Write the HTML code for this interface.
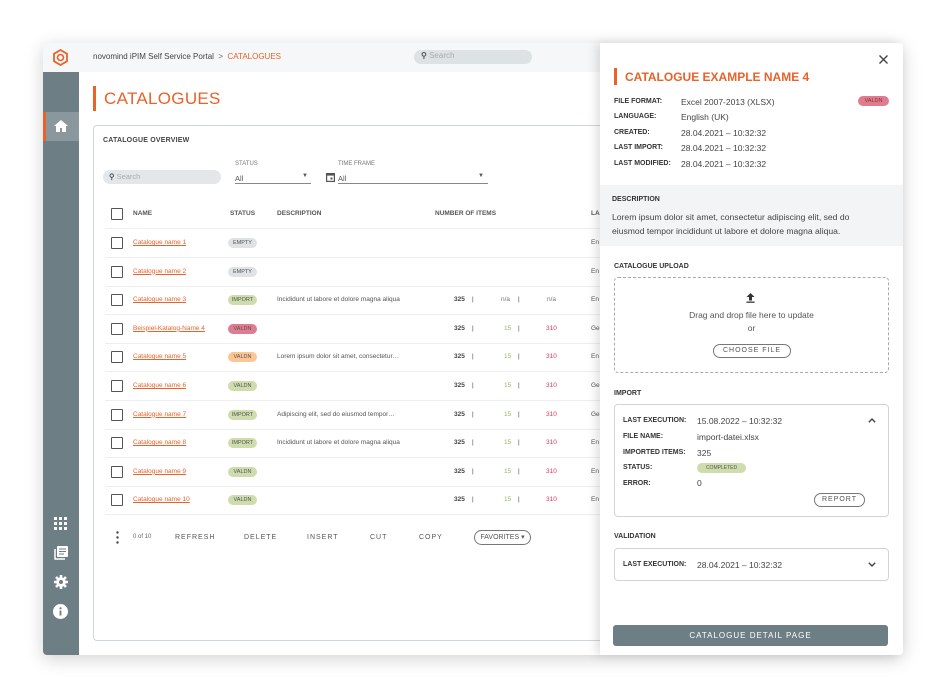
<!DOCTYPE html>
<html><head><meta charset="utf-8"><style>
*{box-sizing:border-box;margin:0;padding:0}
body{width:946px;height:698px;background:#fff;font-family:"Liberation Sans",sans-serif;position:relative;overflow:hidden;color:#333}
.a{position:absolute;white-space:nowrap}
.win{position:absolute;left:43px;top:43px;width:860px;height:612px;background:#fff;box-shadow:0 4px 18px rgba(0,0,0,.18);border-radius:4px;overflow:hidden}
.lbl{font-size:7px;font-weight:bold;color:#444;letter-spacing:.2px}
.pill{position:absolute;height:10px;border-radius:5px;font-size:5.5px;color:#555;text-align:center;line-height:10px;width:29px}
.cb{position:absolute;width:12px;height:12px;border:1.5px solid #555;border-radius:1px}
.lnk{font-size:6.5px;color:#e8622a;text-decoration:underline}
.rl{position:absolute;left:105px;width:500px;height:1px;background:#eceef0}
.pl{font-size:7px;font-weight:bold;color:#333}
.pv{font-size:8.5px;color:#444}
.btn{position:absolute;border:1px solid #777;border-radius:8px;font-size:7px;letter-spacing:1px;color:#555;text-align:center}
</style></head><body>
<div class="win">
 <div class="a" style="left:0;top:0;width:860px;height:29px;background:#f6f7f8"></div>
 <svg class="a" style="left:9px;top:6px" width="17" height="17" viewBox="0 0 17 17"><polygon points="8.5,1 15,4.8 15,12.2 8.5,16 2,12.2 2,4.8" fill="none" stroke="#e8622a" stroke-width="1.8"/><circle cx="8.5" cy="8.5" r="3" fill="none" stroke="#e8622a" stroke-width="1.6"/></svg>
 <div class="a" style="left:50px;top:9px;font-size:8px;color:#444">novomind iPIM Self Service Portal &nbsp;<span style="color:#666">&gt;</span>&nbsp; <span style="color:#e8622a">CATALOGUES</span></div>
 <div class="a" style="left:371px;top:7px;width:118px;height:14px;border-radius:7px;background:#dde2e5"></div>
 <div class="a" style="left:378px;top:8px;font-size:8px;color:#aaa"><b style="color:#555">⚲</b> Search</div>
 <div class="a" style="left:0;top:29px;width:36px;height:583px;background:#6e7e85"></div>
 <div class="a" style="left:0;top:69px;width:36px;height:29px;background:#8a979d;border-left:3px solid #e8622a"></div>
 <svg class="a" style="left:11px;top:77px" width="14" height="12" viewBox="0 0 14 12"><path d="M7 0L0 6h2v6h4V8h2v4h4V6h2z" fill="#fff"/></svg>
 <svg class="a" style="left:11px;top:474px" width="13" height="13" viewBox="0 0 13 13" fill="#fff"><rect x="0" y="0" width="3" height="3"/><rect x="5" y="0" width="3" height="3"/><rect x="10" y="0" width="3" height="3"/><rect x="0" y="5" width="3" height="3"/><rect x="5" y="5" width="3" height="3"/><rect x="10" y="5" width="3" height="3"/><rect x="0" y="10" width="3" height="3"/><rect x="5" y="10" width="3" height="3"/><rect x="10" y="10" width="3" height="3"/></svg>
 <svg class="a" style="left:11px;top:503px" width="14" height="14" viewBox="0 0 14 14"><rect x="3" y="0" width="11" height="11" rx="1" fill="#fff"/><path d="M1 3v10h10" stroke="#fff" stroke-width="1.5" fill="none"/><path d="M5 3h7M5 5.5h7M5 8h5" stroke="#6e7e85"/></svg>
 <svg class="a" style="left:11px;top:532px" width="14" height="14" viewBox="0 0 14 14"><circle cx="7" cy="7" r="4.8" fill="#fff"/><path d="M7 0v14M0 7h14M2 2l10 10M12 2L2 12" stroke="#fff" stroke-width="2.6"/><circle cx="7" cy="7" r="2" fill="#6e7e85"/></svg>
 <svg class="a" style="left:10px;top:561px" width="15" height="15" viewBox="0 0 15 15"><circle cx="7.5" cy="7.5" r="7.5" fill="#fff"/><rect x="6.6" y="6.5" width="1.8" height="5" fill="#6e7e85"/><circle cx="7.5" cy="4.3" r="1.1" fill="#6e7e85"/></svg>
 <div class="a" style="left:50px;top:43px;width:3px;height:25px;background:#e8622a"></div>
 <div class="a" style="left:61px;top:46px;font-size:17px;color:#e8622a;letter-spacing:.3px">CATALOGUES</div>
 <div class="a" style="left:50px;top:82px;width:600px;height:516px;border:1px solid #cfd6da;border-radius:4px"></div>
</div>
<div class="a lbl" style="left:103px;top:137px">CATALOGUE OVERVIEW</div>
<div class="a" style="left:103px;top:170px;width:118px;height:14px;border-radius:7px;background:#e3e7e9"></div>
<div class="a" style="left:109px;top:172px;font-size:7.5px;color:#aaa"><b style="color:#555">⚲</b> Search</div>
<div class="a" style="left:235px;top:161px;font-size:6px;color:#777">STATUS</div>
<div class="a" style="left:235px;top:174px;font-size:7.5px;color:#555">All</div>
<div class="a" style="left:235px;top:183px;width:76px;height:1px;background:#888"></div>
<div class="a" style="left:302px;top:173px;font-size:6px;color:#555">▼</div>
<svg class="a" style="left:326px;top:172px" width="9" height="10" viewBox="0 0 9 10"><rect x="0.6" y="1.6" width="7.8" height="7.8" fill="none" stroke="#555" stroke-width="1.2"/><rect x="0.6" y="1.6" width="7.8" height="2" fill="#555"/><rect x="4.5" y="5.5" width="2" height="2" fill="#555"/></svg>
<div class="a" style="left:338px;top:161px;font-size:6px;color:#777">TIME FRAME</div>
<div class="a" style="left:338px;top:174px;font-size:7.5px;color:#555">All</div>
<div class="a" style="left:338px;top:183px;width:150px;height:1px;background:#888"></div>
<div class="a" style="left:478px;top:173px;font-size:6px;color:#555">▼</div>
<div class="cb" style="left:111px;top:208px"></div>
<div class="a" style="left:133px;top:210px;font-size:6.5px;font-weight:bold;color:#555">NAME</div>
<div class="a" style="left:230px;top:210px;font-size:6.5px;font-weight:bold;color:#555">STATUS</div>
<div class="a" style="left:277px;top:210px;font-size:6.5px;font-weight:bold;color:#555">DESCRIPTION</div>
<div class="a" style="left:435px;top:210px;font-size:6.5px;font-weight:bold;color:#555">NUMBER OF ITEMS</div>
<div class="a" style="left:591px;top:210px;font-size:6.5px;font-weight:bold;color:#555">LA</div>
<div class="rl" style="top:228px"></div>

<div id="rows"></div>
<script>
var R=[["Catalogue name 1","EMPTY","#dfe3e6","","","","","En"],
["Catalogue name 2","EMPTY","#dfe3e6","","","","","En"],
["Catalogue name 3","IMPORT","#cfdcae","Incididunt ut labore et dolore magna aliqua","325","n/a","n/a","En"],
["Beispiel-Katalog-Name 4","VALDN","#df7c90","","325","15","310","Ge"],
["Catalogue name 5","VALDN","#fcc595","Lorem ipsum dolor sit amet, consectetur…","325","15","310","En"],
["Catalogue name 6","VALDN","#cfdcae","","325","15","310","Ge"],
["Catalogue name 7","IMPORT","#cfdcae","Adipiscing elit, sed do eiusmod tempor…","325","15","310","Ge"],
["Catalogue name 8","IMPORT","#cfdcae","Incididunt ut labore et dolore magna aliqua","325","15","310","En"],
["Catalogue name 9","VALDN","#cfdcae","","325","15","310","En"],
["Catalogue name 10","VALDN","#cfdcae","","325","15","310","En"]];
var h="";R.forEach(function(r,i){var y=243+i*28.6;
h+='<div class="cb" style="left:111px;top:'+(y-6)+'px"></div>';
h+='<div class="a lnk" style="left:133px;top:'+(y-4)+'px">'+r[0]+'</div>';
h+='<div class="pill" style="left:228px;top:'+(y-5)+'px;background:'+r[2]+'">'+r[1]+'</div>';
h+='<div class="a" style="left:277px;top:'+(y-4)+'px;font-size:6.5px;color:#555">'+r[3]+'</div>';
if(r[4]){var na=r[5]=="n/a";
h+='<div class="a" style="left:454px;top:'+(y-4)+'px;font-size:6.5px;font-weight:bold;color:#444">325</div>';
h+='<div class="a" style="left:472px;top:'+(y-4)+'px;font-size:6.5px;color:#444">|</div><div class="a" style="left:518px;top:'+(y-4)+'px;font-size:6.5px;color:#444">|</div>';
h+='<div class="a" style="left:'+(na?501:504)+'px;top:'+(y-4)+'px;font-size:6.5px;color:'+(na?'#777':'#9ab85a')+'">'+r[5]+'</div>';
h+='<div class="a" style="left:'+(na?547:546)+'px;top:'+(y-4)+'px;font-size:6.5px;color:'+(na?'#777':'#e0345a')+'">'+r[6]+'</div>';}
h+='<div class="a" style="left:591px;top:'+(y-4)+'px;font-size:6.5px;color:#555">'+r[7]+'</div>';
h+='<div class="rl" style="top:'+(y+14)+'px"></div>';});
document.getElementById("rows").innerHTML=h;
</script>
<svg class="a" style="left:116px;top:531px" width="3" height="13" viewBox="0 0 3 13" fill="#444"><circle cx="1.5" cy="1.5" r="1.2"/><circle cx="1.5" cy="6.5" r="1.2"/><circle cx="1.5" cy="11.5" r="1.2"/></svg>
<div class="a" style="left:133px;top:534px;font-size:6px;color:#666">0 of 10</div>
<div class="a" style="left:175px;top:534px;font-size:7px;letter-spacing:1px;color:#555">REFRESH</div>
<div class="a" style="left:244px;top:534px;font-size:7px;letter-spacing:1px;color:#555">DELETE</div>
<div class="a" style="left:307px;top:534px;font-size:7px;letter-spacing:1px;color:#555">INSERT</div>
<div class="a" style="left:370px;top:534px;font-size:7px;letter-spacing:1px;color:#555">CUT</div>
<div class="a" style="left:419px;top:534px;font-size:7px;letter-spacing:1px;color:#555">COPY</div>
<div class="btn" style="left:474px;top:530px;width:57px;height:15px;line-height:13px;letter-spacing:0">FAVORITES ▾</div>

<!-- panel -->
<div class="a" style="left:600px;top:43px;width:303px;height:612px;background:#fff;box-shadow:-4px 0 10px rgba(0,0,0,.12);border-radius:0 4px 4px 0"></div>
<svg class="a" style="left:879px;top:55px" width="9" height="9" viewBox="0 0 9 9"><path d="M0.5 0.5L8.5 8.5M8.5 0.5L0.5 8.5" stroke="#444" stroke-width="1.4"/></svg>
<div class="a" style="left:614px;top:68px;width:3px;height:17px;background:#e8622a"></div>
<div class="a" style="left:625px;top:70px;font-size:12px;font-weight:bold;color:#e8622a">CATALOGUE EXAMPLE NAME 4</div>
<div class="a pl" style="left:614px;top:98px">FILE FORMAT:</div><div class="a pv" style="left:681px;top:97px">Excel 2007-2013 (XLSX)</div>
<div class="a pl" style="left:614px;top:113px">LANGUAGE:</div><div class="a pv" style="left:681px;top:112px">English (UK)</div>
<div class="a pl" style="left:614px;top:129px">CREATED:</div><div class="a pv" style="left:681px;top:128px">28.04.2021 – 10:32:32</div>
<div class="a pl" style="left:614px;top:144px">LAST IMPORT:</div><div class="a pv" style="left:681px;top:143px">28.04.2021 – 10:32:32</div>
<div class="a pl" style="left:614px;top:160px">LAST MODIFIED:</div><div class="a pv" style="left:681px;top:159px">28.04.2021 – 10:32:32</div>
<div class="pill" style="left:858px;top:96px;width:31px;background:#df7c90;color:#833">VALDN</div>
<div class="a" style="left:600px;top:185px;width:303px;height:61px;background:#f2f4f6"></div>
<div class="a pl" style="left:612px;top:196px">DESCRIPTION</div>
<div class="a" style="left:612px;top:210px;font-size:8.6px;line-height:14px;color:#444;white-space:normal;width:262px">Lorem ipsum dolor sit amet, consectetur adipiscing elit, sed do eiusmod tempor incididunt ut labore et dolore magna aliqua.</div>
<div class="a pl" style="left:614px;top:263px">CATALOGUE UPLOAD</div>
<div class="a" style="left:614px;top:277px;width:275px;height:96px;border:1.2px dashed #aaa;border-radius:4px"></div>
<svg class="a" style="left:746px;top:293px" width="9" height="10" viewBox="0 0 9 10"><path d="M4.5 0L0.5 4h2.5v3.5h3V4h2.5z" fill="#333"/><rect x="0.5" y="8.5" width="8" height="1.3" fill="#333"/></svg>
<div class="a" style="left:614px;top:310px;width:275px;text-align:center;font-size:8.5px;color:#555">Drag and drop file here to update</div>
<div class="a" style="left:614px;top:323px;width:275px;text-align:center;font-size:8.5px;color:#555">or</div>
<div class="btn" style="left:713px;top:344px;width:78px;height:14px;line-height:12px">CHOOSE FILE</div>
<div class="a pl" style="left:614px;top:390px">IMPORT</div>
<div class="a" style="left:614px;top:404px;width:275px;height:113px;border:1px solid #cfd6da;border-radius:4px"></div>
<div class="a pl" style="left:623px;top:417px">LAST EXECUTION:</div><div class="a pv" style="left:697px;top:416px">15.08.2022 – 10:32:32</div>
<svg class="a" style="left:868px;top:418px" width="8" height="5" viewBox="0 0 8 5"><path d="M0.8 4.2L4 1L7.2 4.2" fill="none" stroke="#444" stroke-width="1.4"/></svg>
<div class="a pl" style="left:623px;top:433px">FILE NAME:</div><div class="a pv" style="left:697px;top:432px">import-datei.xlsx</div>
<div class="a pl" style="left:623px;top:449px">IMPORTED ITEMS:</div><div class="a pv" style="left:697px;top:448px">325</div>
<div class="a pl" style="left:623px;top:464px">STATUS:</div>
<div class="pill" style="left:697px;top:463px;width:49px;background:#cfdcae;font-size:5px">COMPLETED</div>
<div class="a pl" style="left:623px;top:480px">ERROR:</div><div class="a pv" style="left:697px;top:478px">0</div>
<div class="btn" style="left:814px;top:493px;width:51px;height:14px;line-height:12px">REPORT</div>
<div class="a pl" style="left:614px;top:533px">VALIDATION</div>
<div class="a" style="left:614px;top:548px;width:275px;height:33px;border:1px solid #cfd6da;border-radius:4px"></div>
<div class="a pl" style="left:623px;top:561px">LAST EXECUTION:</div><div class="a pv" style="left:697px;top:560px">28.04.2021 – 10:32:32</div>
<svg class="a" style="left:868px;top:562px" width="8" height="5" viewBox="0 0 8 5"><path d="M0.8 0.8L4 4L7.2 0.8" fill="none" stroke="#444" stroke-width="1.4"/></svg>
<div class="a" style="left:613px;top:625px;width:275px;height:21px;background:#6e7e85;border-radius:3px;color:#fff;font-size:8px;letter-spacing:1px;text-align:center;line-height:21px">CATALOGUE DETAIL PAGE</div>
</body></html>
